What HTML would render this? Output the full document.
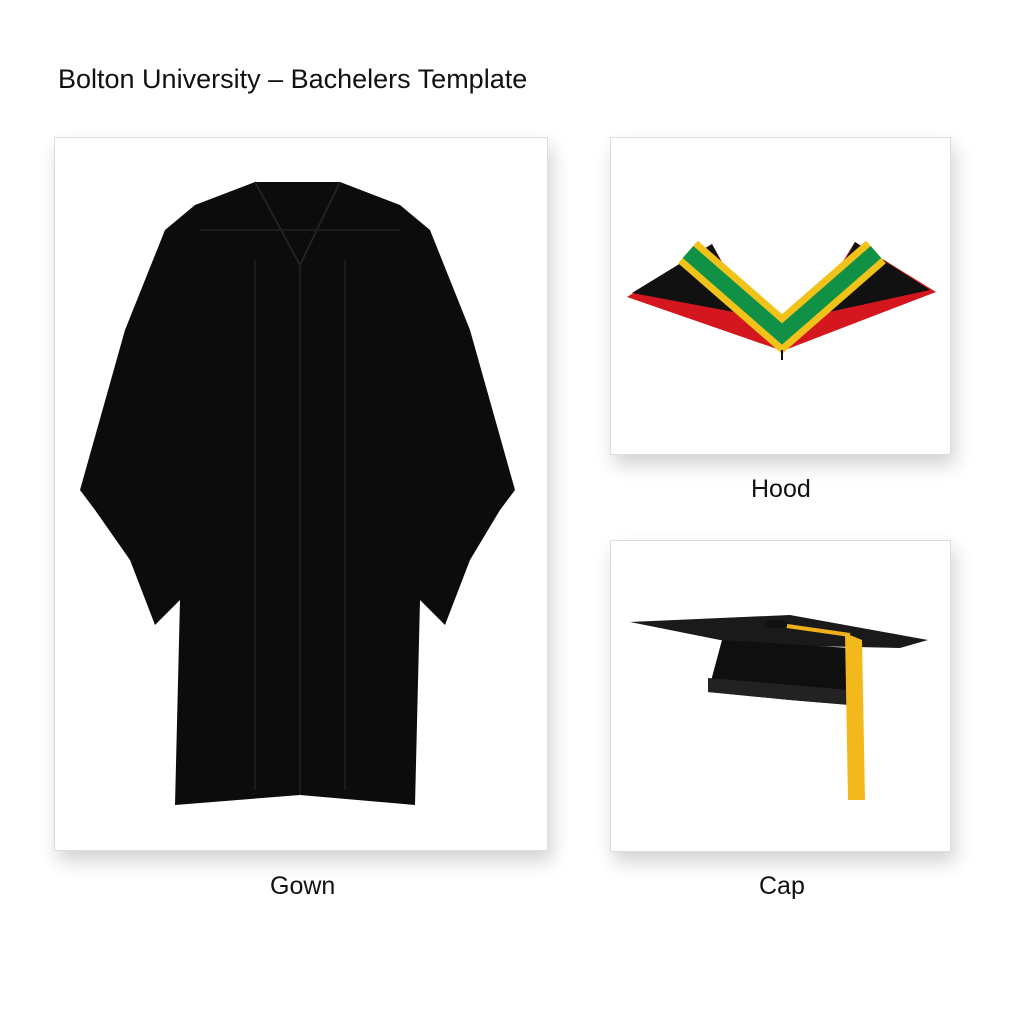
<!DOCTYPE html>
<html><head><meta charset="utf-8"><style>
body{margin:0;width:1024px;height:1024px;background:#fff;font-family:"Liberation Sans",sans-serif;position:relative;overflow:hidden}
.t{position:absolute;font-size:25px;color:#111}
.card{position:absolute;background:#fff;border:1px solid #ddd;box-shadow:4px 10px 18px rgba(0,0,0,.18)}
</style></head><body>
<div class="t" style="left:58px;top:64px;font-size:27px">Bolton University – Bachelers Template</div>
<div class="card" style="left:54px;top:137px;width:492px;height:712px"></div>
<div class="card" style="left:610px;top:137px;width:339px;height:316px"></div>
<div class="card" style="left:610px;top:540px;width:339px;height:310px"></div>
<div class="t" style="left:270px;top:872px">Gown</div>
<div class="t" style="left:751px;top:475px">Hood</div>
<div class="t" style="left:759px;top:872px">Cap</div>
<svg width="1024" height="1024" style="position:absolute;left:0;top:0">
<polygon fill="#0c0c0c" points="255,182 340,182 400,205 430,230 470,330 515,490 500,510 470,560 445,625 420,600 415,805 300,795 175,805 180,600 155,625 130,560 95,510 80,490 125,330 165,230 195,205"/>
<path d="M255,182 L300,265 L340,182" fill="none" stroke="#222" stroke-width="2"/>
<path d="M300,265 V795 M200,230 L400,230 M255,260 V790 M345,260 V790" stroke="#1c1c1c" stroke-width="2"/>
<polygon fill="#d4161e" points="627,297 712,244 760,330 780,350"/>
<polygon fill="#d4161e" points="936,292 855,242 800,330 785,350"/>
<polygon fill="#111" points="632,293 712,244 750,315"/>
<polygon fill="#111" points="930,290 855,242 815,315"/>
<polyline points="688,252 782,334 876,252" fill="none" stroke="#f1c21a" stroke-width="30" stroke-linejoin="miter"/>
<polyline points="688,252 782,334 876,252" fill="none" stroke="#119146" stroke-width="16" stroke-linejoin="miter"/>
<line x1="782" y1="350" x2="782" y2="360" stroke="#111" stroke-width="2"/>
<polygon fill="#1a1a1a" points="630,622 790,615 928,640 900,648 760,645 720,640"/>
<polygon fill="#0f0f0f" points="722,640 850,648 850,705 790,700 708,692"/>
<polygon fill="#222" points="708,678 850,690 850,705 790,700 708,692"/>
<ellipse cx="777" cy="624" rx="12" ry="4" fill="#111"/>
<path d="M787,626 L850,635" stroke="#f0b01a" stroke-width="4"/>
<polygon fill="#f2b81c" points="845,633 862,640 865,800 848,800"/>
</svg>
</body></html>
